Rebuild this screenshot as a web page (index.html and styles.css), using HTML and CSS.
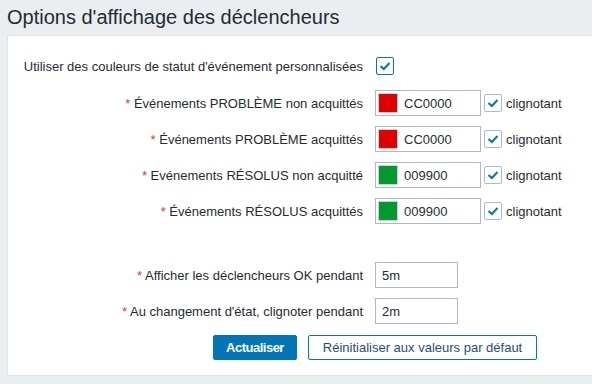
FILE: index.html
```html
<!DOCTYPE html>
<html lang="fr">
<head>
<meta charset="utf-8">
<title>Options d'affichage des déclencheurs</title>
<link rel="stylesheet" href="styles.css">
</head>
<body>
<div class="header"><h1>Options d'affichage des déclencheurs</h1></div>
<div class="panel">
  <div class="form">
    <label class="lbl">Utiliser des couleurs de statut d'événement personnalisées</label>
    <div class="ctl"><span class="check focus"><svg width="16" height="16" viewBox="0 0 16 16"><path d="M3.5 8 L6.8 11 L12.5 5" /></svg></span></div>

    <label class="lbl"><span class="req">*</span> Événements PROBLÈME non acquittés</label>
    <div class="ctl">
      <span class="color-input"><span class="swatch red"></span>CC0000</span>
      <span class="check"><svg width="16" height="16" viewBox="0 0 16 16"><path d="M3.5 8 L6.8 11 L12.5 5" /></svg></span>
      <span class="check-label">clignotant</span>
    </div>

    <label class="lbl"><span class="req">*</span> Événements PROBLÈME acquittés</label>
    <div class="ctl">
      <span class="color-input"><span class="swatch red"></span>CC0000</span>
      <span class="check"><svg width="16" height="16" viewBox="0 0 16 16"><path d="M3.5 8 L6.8 11 L12.5 5" /></svg></span>
      <span class="check-label">clignotant</span>
    </div>

    <label class="lbl"><span class="req">*</span> Evénements RÉSOLUS non acquitté</label>
    <div class="ctl">
      <span class="color-input"><span class="swatch green"></span>009900</span>
      <span class="check"><svg width="16" height="16" viewBox="0 0 16 16"><path d="M3.5 8 L6.8 11 L12.5 5" /></svg></span>
      <span class="check-label">clignotant</span>
    </div>

    <label class="lbl"><span class="req">*</span> Événements RÉSOLUS acquittés</label>
    <div class="ctl">
      <span class="color-input"><span class="swatch green"></span>009900</span>
      <span class="check"><svg width="16" height="16" viewBox="0 0 16 16"><path d="M3.5 8 L6.8 11 L12.5 5" /></svg></span>
      <span class="check-label">clignotant</span>
    </div>

    <div class="spacer"></div>

    <label class="lbl"><span class="req">*</span> Afficher les déclencheurs OK pendant</label>
    <div class="ctl"><span class="text-input">5m</span></div>

    <label class="lbl"><span class="req">*</span> Au changement d'état, clignoter pendant</label>
    <div class="ctl"><span class="text-input">2m</span></div>

    <div class="buttons">
      <button class="btn">Actualiser</button>
      <button class="btn btn-alt">Réinitialiser aux valeurs par défaut</button>
    </div>
  </div>
</div>
</body>
</html>
```

FILE: styles.css
```css
body {
    margin: 0;
    background: #ebeef0;
    font-family: "Liberation Sans", Arial, sans-serif;
    font-size: 13px;
    color: #1f2c33;
    overflow: hidden;
}
.header h1 {
    margin: 0;
    padding-left: 7px;
    font-size: 20px;
    font-weight: normal;
    line-height: 35px;
    color: #1f2c33;
}
.panel {
    margin-left: 7px;
    background: #fff;
    border: 1px solid #dfe4e7;
    border-right: none;
}
.form {
    display: grid;
    grid-template-columns: 345px 1fr;
    grid-template-rows: 28px repeat(4, 26px) 18px repeat(3, 26px);
    column-gap: 12px;
    row-gap: 10px;
    align-items: center;
    padding: 16px 0 15px 10px;
}
.lbl {
    text-align: right;
    white-space: nowrap;
}
.req {
    color: #e33734;
}
.ctl {
    display: flex;
    align-items: center;
}
.spacer {
    grid-column: 1 / -1;
}
.color-input, .text-input {
    box-sizing: border-box;
    height: 26px;
    border: 1px solid #acbbc2;
    display: flex;
    align-items: center;
}
.color-input {
    width: 106px;
    padding-left: 2px;
}
.text-input {
    width: 83px;
    padding-left: 6px;
}
.swatch {
    width: 20px;
    height: 20px;
    margin-right: 6px;
    box-sizing: border-box;
    border: 1px solid #c8d2d7;
}
.swatch.red { background: #e00000; }
.swatch.green { background: #029a2e; }
.check {
    box-sizing: border-box;
    width: 18px;
    height: 18px;
    border: 1px solid #acbbc2;
    border-radius: 2px;
    background: #fff;
    display: flex;
    align-items: center;
    justify-content: center;
    margin-left: 3px;
}
.ctl .check:first-child { margin-left: 1px; }
.check.focus { border-color: #0275b8; }
.check svg path {
    fill: none;
    stroke: #0275b8;
    stroke-width: 2;
}
.check-label {
    margin-left: 4px;
}
.buttons {
    grid-column: 1 / -1;
    display: flex;
    gap: 11px;
    padding-left: 195px;
}
.btn {
    box-sizing: border-box;
    width: 84px;
    height: 25px;
    padding: 0;
    border: 1px solid #0275b8;
    border-radius: 2px;
    background: #0275b8;
    color: #fff;
    font-family: "Liberation Sans", Arial, sans-serif;
    font-size: 13px;
    font-weight: bold;
    letter-spacing: -0.5px;
}
.btn-alt {
    width: 229px;
    background: #fff;
    color: #1d4f7c;
    font-weight: normal;
    letter-spacing: 0;
}
```
